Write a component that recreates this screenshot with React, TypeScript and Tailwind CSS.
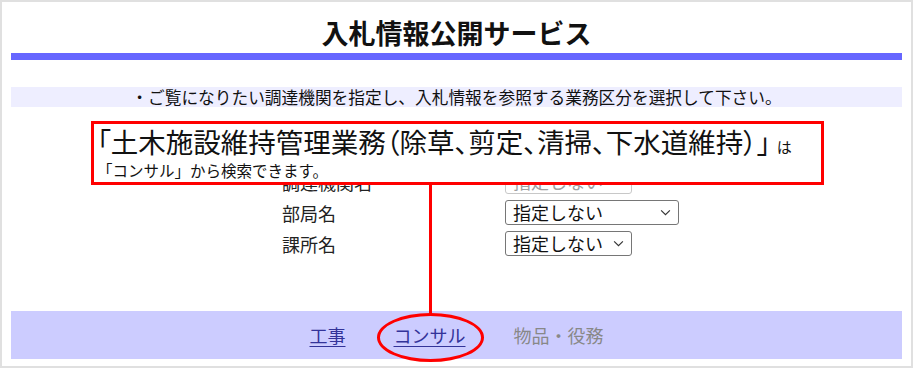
import React from 'react';

const font = "font-['Noto_Sans_CJK_JP','Noto_Sans',sans-serif]";

const Chevron = ({ className = '' }: { className?: string }) => (
  <svg viewBox="0 0 12 8" className={`w-[11px] h-[7px] ${className}`} fill="none" stroke="currentColor" strokeWidth="1.3">
    <path d="M1 1.5 L6 6.5 L11 1.5" />
  </svg>
);

interface SelectBoxProps {
  value: string;
  width: string;
  disabled?: boolean;
}

const SelectBox: React.FC<SelectBoxProps> = ({ value, width, disabled }) => (
  <div
    className={`flex items-center justify-between h-[25px] rounded-[3px] border pl-[7px] pr-[7px] ${width} ${
      disabled ? 'border-[#c8c8c8] text-[#a0a0a0]' : 'border-[#767676] text-[#111]'
    }`}
  >
    <span className="text-[18px] leading-[23px]">{value}</span>
    <Chevron className={disabled ? 'text-[#b0b0b0]' : 'text-[#333]'} />
  </div>
);

const rows = [
  { label: '調達機関名', width: 'w-[127px]', disabled: true },
  { label: '部局名', width: 'w-[174px]', disabled: false },
  { label: '課所名', width: 'w-[127px]', disabled: false },
];

export default function App() {
  return (
    <div className={`relative w-[913px] h-[368px] border-2 border-[#e0e0e0] bg-white px-[9px] text-[#222] ${font}`}>
      <h1 className="h-[51px] pt-[13px] text-center text-[27px] font-bold leading-[36px] text-[#111]">
        入札情報公開サービス
      </h1>
      <div className="h-[7px] bg-[#6666ff]" />

      <div className="mt-[27px] h-[20px] bg-[#eeeeff] text-center text-[16.7px] leading-[20px] text-[#111]">
        ・ご覧になりたい調達機関を指定し、入札情報を参照する業務区分を選択して下さい。
      </div>

      <div className="mt-[59px] pl-[271px]">
        {rows.map((row) => (
          <div key={row.label} className="flex items-center h-[31px]">
            <div className="w-[223px] text-[18px] leading-[24px] text-[#222]">{row.label}</div>
            <SelectBox value="指定しない" width={row.width} disabled={row.disabled} />
          </div>
        ))}
      </div>

      <div className="mt-[52px] h-[48px] bg-[#ccccff] flex items-center justify-center gap-12 text-[18px] leading-[24px]">
        <a href="#" className="text-[#333399] underline underline-offset-[3px]">工事</a>
        <a href="#" className="text-[#333399] underline underline-offset-[3px]">コンサル</a>
        <span className="text-[#888888]">物品・役務</span>
      </div>

      {/* annotation overlay */}
      <div className="absolute left-[89px] top-[119px] w-[733px] h-[64px] border-[3px] border-[#ff0000] bg-white pl-[3px] overflow-hidden">
        <div className="pt-[2px] leading-[30px] text-[#111] whitespace-nowrap">
          <span className="text-[27.5px] [font-feature-settings:'palt']">「土木施設維持管理業務（除草、剪定、清掃、下水道維持）」</span>
          <span className="text-[15px] ml-[6px]">は</span>
        </div>
        <div className="text-[15.5px] leading-[16px] text-[#111] whitespace-nowrap">「コンサル」から検索できます。</div>
      </div>
      <div className="absolute left-[427px] top-[181px] w-[3px] h-[131px] bg-[#ff0000]" />
      <div className="absolute left-[375px] top-[311px] w-[107px] h-[49px] rounded-[50%] border-[3px] border-[#ff0000]" />
    </div>
  );
}
